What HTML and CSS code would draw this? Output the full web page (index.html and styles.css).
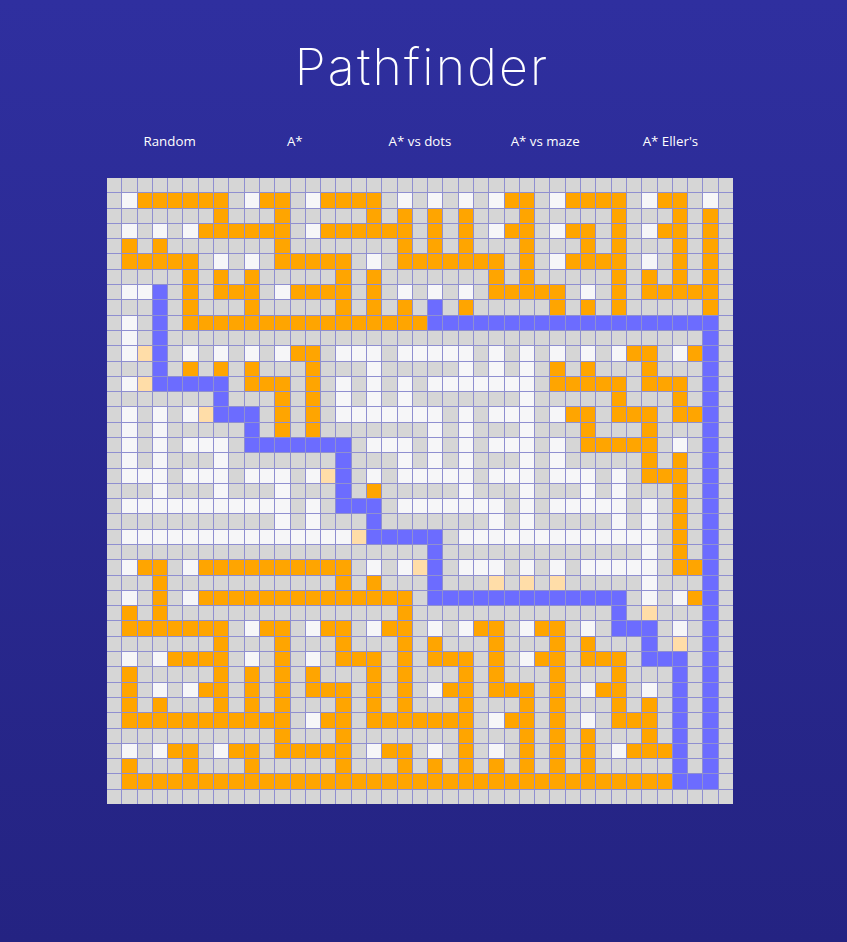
FILE: index.html
```html
<!DOCTYPE html>
<html lang="en">
<head>
  <meta charset="UTF-8" />
  <meta name="viewport" content="width=device-width, initial-scale=1.0" />
  <title>Pathfinder</title>
  <link rel="stylesheet" href="styles.css">
</head>
<body>
  <div class="app">
    <h1 class="title">Pathfinder</h1>
    <div class="modes">
      <a class="mode">Random</a>
      <a class="mode">A*</a>
      <a class="mode">A* vs dots</a>
      <a class="mode">A* vs maze</a>
      <a class="mode">A* Eller's</a>
    </div>
    <div class="grid" id="grid"></div>
  </div>

  <script>
    // . wall, W open, O visited, B path, T frontier (spaces are only there to count columns)
    const rows = [
      ".......... .......... .......... .......... .",
      ".WOOOOOO.W OO.WOOOO.W .W.W.WOO.W OOOO.WOO.W .",
      ".......O.. .O.....O.O .O.O...O.. ...O...O.O .",
      ".W.W.WOOOO OO.WOOOOOO .O.O.WOO.W OO.O.WOO.O .",
      ".O.O...... .O.......O .O.O...O.. .O.O...O.O .",
      ".OOOOO.W.W .OOOOO.W.O OOOOOO.O.W OOOO.W.O.O .",
      ".....O.O.O .....O.O.. .....O.O.. ...O.O.O.O .",
      ".WWB.O.OOO .WOOOO.O.W .W.W.OOOOO .W.O.OOOOO .",
      "...B.O...O .....O.O.O .B.O.....O .O.O.....O .",
      ".W.B.OOOOO OOOOOOOOOO OBBBBBBBBB BBBBBBBBBB .",
      ".W.B...... .......... .......... .........B .",
      ".WTB.W.W.W .WOO.WWW.W WWWW.W.W.W .W.WOO.WOB .",
      "...B.O.O.O ...O...W.. ...W.W.W.O .O...O...B .",
      ".WTBBBBB.O OO.O.W.W.W .WWWWWWW.O OOOO.OOO.B .",
      ".......B.. .O.O.W.W.W .......W.. ...O...O.B .",
      ".W.W.WTBBB .O.O.WWWWW WW.W.WWW.W OO.OOO.OOB .",
      ".W.W.....B .O.O...... .W.W...W.. .O...O...B .",
      ".W.W.WWW.B BBBBBB.WWW .W.W.WWW.W .OOOOO.W.B .",
      ".W.W...W.. .....B...W .W.W...W.W .....O.O.B .",
      ".WWW.WWW.W WW.WTB.W.W WWWW.WWW.W WW.W.OOO.B .",
      "...W...W.. .W...B.O.. ...W...W.. .W.W...O.B .",
      ".WWWWWWWWW WW.W.BBB.W WWWWWW.W.W WWWW.W.O.B .",
      ".......... .W.W...B.. .....W.W.. ...W.W.O.B .",
      ".WWWWWWWWW WWWWWWTBBB BB.WWWWWWW WWWWWW.O.B .",
      ".......... .......... .B........ .....W.O.B .",
      ".WOO.WOOOO OOOOOO.W.W TB.WWW.W.W .WWWWW.OOB .",
      "...O...... .....O.O.. .B...T.T.T .....W...B .",
      ".W.O.WOOOO OOOOOOOOOO .BBBBBBBBB BBBB.W.WOB .",
      ".O.O...... .........O .......... ...B.T...B .",
      ".OOOOOOO.W OO.WOO.WOO .W.WOO.WOO .W.BBB.W.B .",
      ".......O.. .O...O...O .O...O...O .O...B.T.B .",
      ".W.WOOOO.W .O.W.OOO.O .OOO.O.WOO .OOO.BBB.B .",
      ".O.....O.O .O.O...O.O ...O.O...O ...O...B.B .",
      ".O.W.WOO.O .O.OOO.O.O .WOO.OOO.O .WOO.W.B.B .",
      ".O.O...O.O .O...O.O.O ...O...O.O ...O.O.B.B .",
      ".OOOOOOOOO OO.WOO.OOO OOOO.WOO.O .W.OOO.B.B .",
      ".......... .O...O.... ...O...O.O .O...O.B.B .",
      ".W.WOO.WOO .OOOOO.WOO .W.O.W.O.O .O.WOOOB.B .",
      ".O...O...O .....O...O .O.O.O.O.O .O.....B.B .",
      ".OOOOOOOOO OOOOOOOOOO OOOOOOOOOO OOOOOOOBBB .",
      ".......... .......... .......... .......... ."
    ];

    const kinds = { '.': 'wall', W: 'open', O: 'visited', B: 'path', T: 'frontier' };
    const grid = document.getElementById('grid');

    rows.forEach(row => {
      row.replace(/ /g, '').split('').forEach(ch => {
        const cell = document.createElement('div');
        cell.className = `cell ${kinds[ch]}`;
        grid.appendChild(cell);
      });
    });
  </script>
</body>
</html>
```

FILE: styles.css
```css
html, body {
  min-height: 100%;
}
body {
  margin: 0;
  height: 942px;
  background: linear-gradient(to bottom, #2f2f9f, #242382);
  color: #fff;
  font-family: "Open Sans", sans-serif;
}
.app {
  width: 840px;
}
.title {
  margin: 0;
  padding-top: 34px;
  height: 67px;
  line-height: 67px;
  font-family: Inter, sans-serif;
  font-size: 50px;
  font-weight: 200;
  letter-spacing: 2.2px;
  text-indent: 4px;
  text-align: center;
}
.modes {
  display: flex;
  width: 626px;
  margin: 30px auto 0;
}
.mode {
  flex: 1;
  font-size: 13.3px;
  line-height: 20px;
  text-align: center;
}
.grid {
  display: grid;
  grid-template-columns: repeat(41, 1fr);
  grid-template-rows: repeat(41, 1fr);
  gap: 1px;
  width: 626px;
  height: 626px;
  margin: 27px auto 0;
  background: #8f8fd0;
}
.wall { background: #d6d6d6; }
.open { background: #f6f6f8; }
.visited { background: #ffa500; }
.path { background: #6c6cff; }
.frontier { background: #ffdda8; }
```
